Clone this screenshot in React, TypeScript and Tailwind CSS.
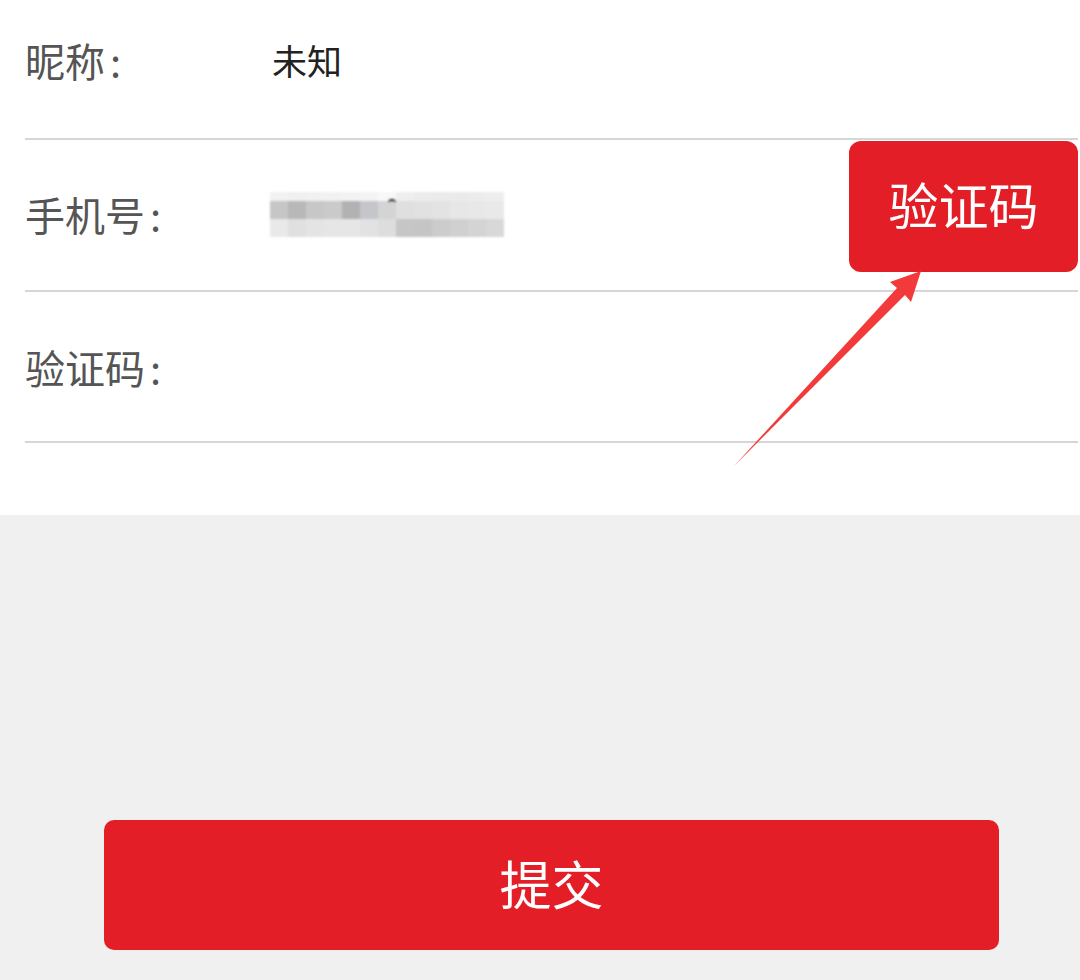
const font = { fontFamily: '"Noto Sans CJK SC", "Microsoft YaHei", sans-serif' }

// pixelated (mosaic) phone number
const mosaic: string[][] = [
  ['#f2f2f2', '#f0f0f0', '#f1f1f1', '#f1f1f1', '#f3f3f3', '#f3f3f3', '#f8f8f8', '#eeeeee', '#ececec', '#ebebeb', '#eaeaea', '#ececec', '#ededed'],
  ['#c6c6c6', '#b8b8b8', '#c7c7c7', '#cacaca', '#b2b2b2', '#c4c6ca', '#d4d4d4', '#dfdfdf', '#e1e1e1', '#e3e3e3', '#e7e7e7', '#e8e8e8', '#e9e9e9'],
  ['#e9e9e9', '#e0e0e0', '#e4e4e4', '#e6e6e6', '#e6e6e6', '#e2e2e2', '#dddddd', '#c6c6c6', '#c5c5c5', '#cccccc', '#d0d0d0', '#d4d4d4', '#d8d8d8'],
]

function Mosaic() {
  return (
    <div className="relative flex flex-col blur-[0.8px]">
      {mosaic.map((row, r) => (
        <div key={r} className={r === 0 ? 'flex h-[9px]' : 'flex h-[18px]'}>
          {row.map((c, i) => (
            <div key={i} className="w-[18px]" style={{ backgroundColor: c }} />
          ))}
        </div>
      ))}
      <div className="absolute left-[118px] top-[7px] h-[4px] w-[8px] rounded-t-full border-t-2 border-[#222]" />
    </div>
  )
}

function Label({ text, className }: { text: string; className?: string }) {
  return (
    <div className={'text-[40px] text-[#555] ' + (className ?? '')}>
      {text}
      <span className="ml-[5px]">:</span>
    </div>
  )
}

export default function App() {
  return (
    <div className="relative min-h-[980px] bg-[#f0f0f0]" style={font}>
      <div className="flex h-[515px] flex-col bg-white">
        <div className="ml-[25px] mr-[2px] flex flex-col">
          <div className="flex h-[138px] items-center pb-[18px]">
            <Label text="昵称" className="w-[247px]" />
            <span className="text-[35px] text-[#222]">未知</span>
          </div>
          <div className="h-[2px] bg-[#d6d6d6]" />
          <div className="flex h-[150px]">
            <div className="flex flex-1 items-center pb-[2px]">
              <Label text="手机号" className="w-[245px]" />
              <Mosaic />
            </div>
            <button className="mt-[1px] flex h-[131px] w-[229px] items-center justify-center rounded-[12px] bg-[#e41e26] pb-[6px] text-[50px] text-white">
              验证码
            </button>
          </div>
          <div className="h-[2px] bg-[#d6d6d6]" />
          <div className="flex h-[149px] items-center">
            <Label text="验证码" />
          </div>
          <div className="h-[2px] bg-[#d6d6d6]" />
        </div>
      </div>

      <div className="mt-[305px] px-[104px]">
        <button className="flex h-[130px] w-[895px] items-center justify-center rounded-[10px] bg-[#e41e26] pb-[4px] text-[52px] text-white">
          提交
        </button>
      </div>

      {/* annotation arrow */}
      <svg className="absolute left-0 top-0" width="1080" height="980" viewBox="0 0 1080 980">
        <path d="M734 466 L897 288 L890 282 L921 271 L911 302 L905 295 Z" fill="#f23a3a" />
      </svg>
    </div>
  )
}
